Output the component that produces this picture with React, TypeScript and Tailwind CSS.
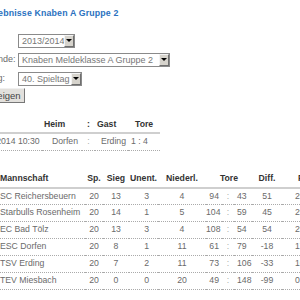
const teams = [
  { rank: '1.', name: 'SC Reichersbeuern', sp: 20, s: 13, u: 3, n: 4, tf: 94, ta: 43, diff: 51, pts: 29 },
  { rank: '2.', name: 'Starbulls Rosenheim', sp: 20, s: 14, u: 1, n: 5, tf: 104, ta: 59, diff: 45, pts: 29 },
  { rank: '3.', name: 'EC Bad Tölz', sp: 20, s: 13, u: 3, n: 4, tf: 108, ta: 54, diff: 54, pts: 29 },
  { rank: '4.', name: 'ESC Dorfen', sp: 20, s: 8, u: 1, n: 11, tf: 61, ta: 79, diff: -18, pts: 17 },
  { rank: '5.', name: 'TSV Erding', sp: 20, s: 7, u: 2, n: 11, tf: 73, ta: 106, diff: -33, pts: 16 },
  { rank: '6.', name: 'TEV Miesbach', sp: 20, s: 0, u: 0, n: 20, tf: 49, ta: 148, diff: -99, pts: 0 },
]

function Select({ value, width }: { value: string; width: string }) {
  return (
    <div className={`flex h-[14px] items-stretch border border-[#8a8a8a] bg-white ${width}`}>
      <span className="flex-1 overflow-hidden whitespace-nowrap pl-[3px] text-[9px] leading-[12px] text-[#777]">
        {value}
      </span>
      <span className="flex w-[10px] items-center justify-center border border-t-[#f4f4f4] border-l-[#f4f4f4] border-r-[#6f6f6f] border-b-[#6f6f6f] bg-[#d6d3cc]">
        <span className="h-0 w-0 border-x-[3px] border-t-[3px] border-x-transparent border-t-black" />
      </span>
    </div>
  )
}

export default function App() {
  const th = 'h-[16px] border-b-2 border-[#cfcfcf] p-0 font-bold text-[#333] whitespace-nowrap'
  const td = 'h-[17px] border-b border-dotted border-[#aaa] p-0 whitespace-nowrap'

  return (
    <div className="relative h-[300px] w-[300px] overflow-hidden bg-white font-['Liberation_Sans',Arial,sans-serif] text-[#6a6a6a]">
      <div className="ml-[-30px] w-[400px]">
        {/* Title */}
        <h1 className="pt-[8px] pl-[13px] text-[8.8px] font-bold leading-[11px] tracking-[0.15px] text-[#2a72c0]">
          Ergebnisse Knaben A Gruppe 2
        </h1>

        {/* Filter form */}
        <div className="mt-[12px] text-[9px]">
          <div className="flex h-[19px] items-center">
            <label className="w-[48px]">Saison:</label>
            <Select value="2013/2014" width="w-[57px]" />
          </div>
          <div className="flex h-[19px] items-center">
            <label className="w-[48px]">Spielrunde:</label>
            <Select value="Knaben Meldeklasse A Gruppe 2" width="w-[152px]" />
          </div>
          <div className="flex h-[19px] items-center">
            <label className="w-[48px]">Spieltag:</label>
            <Select value="40. Spieltag" width="w-[64px]" />
          </div>
          <button className="ml-[7px] h-[15px] border border-t-[#f0f0f0] border-l-[#f0f0f0] border-r-[#777] border-b-[#777] bg-[#e2e0dc] px-[3px] text-[9.5px] leading-[12px] text-[#444]">
            Anzeigen
          </button>
        </div>

        {/* Spiele */}
        <table className="mt-[14px] w-[190px] table-fixed border-collapse text-[8.7px]">
          <colgroup>
            <col className="w-[72px]" />
            <col className="w-[40px]" />
            <col className="w-[13px]" />
            <col className="w-[33px]" />
            <col className="w-[32px]" />
          </colgroup>
          <thead>
            <tr>
              <th className={`${th} text-left pl-[2px]`}>Datum</th>
              <th className={`${th} text-left pl-[2px]`}>Heim</th>
              <th className={`${th} text-center`}>:</th>
              <th className={`${th} text-left pl-[2px]`}>Gast</th>
              <th className={`${th} text-left pl-[7px]`}>Tore</th>
            </tr>
          </thead>
          <tbody>
            <tr>
              <td className={`${td} pl-[2px]`}>16.03.2014 10:30</td>
              <td className={`${td} text-right pr-[4px]`}>Dorfen</td>
              <td className={`${td} text-center text-[#aaa]`}>:</td>
              <td className={`${td} text-right pr-[2px]`}>Erding</td>
              <td className={`${td} pl-[3px]`}>1 : 4</td>
            </tr>
          </tbody>
        </table>

        {/* Tabelle */}
        <table className="mt-[21px] w-[360px] table-fixed border-collapse text-[8.7px]">
          <colgroup>
            <col className="w-[30px]" />
            <col className="w-[85px]" />
            <col className="w-[18px]" />
            <col className="w-[26px]" />
            <col className="w-[29px]" />
            <col className="w-[48px]" />
            <col className="w-[16px]" />
            <col className="w-[12px]" />
            <col className="w-[18px]" />
            <col className="w-[30px]" />
            <col className="w-[48px]" />
          </colgroup>
          <thead>
            <tr>
              <th className={`${th} text-left`}>Pl.</th>
              <th className={`${th} text-left`}>Mannschaft</th>
              <th className={`${th} text-center`}>Sp.</th>
              <th className={`${th} text-center`}>Sieg</th>
              <th className={`${th} text-center`}>Unent.</th>
              <th className={`${th} text-center`}>Niederl.</th>
              <th colSpan={3} className={`${th} text-center`}>Tore</th>
              <th className={`${th} text-center`}>Diff.</th>
              <th className={`${th} text-left pl-[16px]`}>Punkte</th>
            </tr>
          </thead>
          <tbody>
            {teams.map((t) => (
              <tr key={t.name}>
                <td className={`${td} pl-[6px]`}>{t.rank}</td>
                <td className={td}>{t.name}</td>
                <td className={`${td} text-center`}>{t.sp}</td>
                <td className={`${td} text-center`}>{t.s}</td>
                <td className={`${td} text-right pr-[9px]`}>{t.u}</td>
                <td className={`${td} text-center`}>{t.n}</td>
                <td className={`${td} text-right pr-[3px]`}>{t.tf}</td>
                <td className={`${td} text-center text-[#aaa]`}>:</td>
                <td className={`${td} pl-[3px]`}>{t.ta}</td>
                <td className={`${td} text-center`}>{t.diff}</td>
                <td className={`${td} pl-[13px]`}>{t.pts}</td>
              </tr>
            ))}
          </tbody>
        </table>
      </div>
    </div>
  )
}
